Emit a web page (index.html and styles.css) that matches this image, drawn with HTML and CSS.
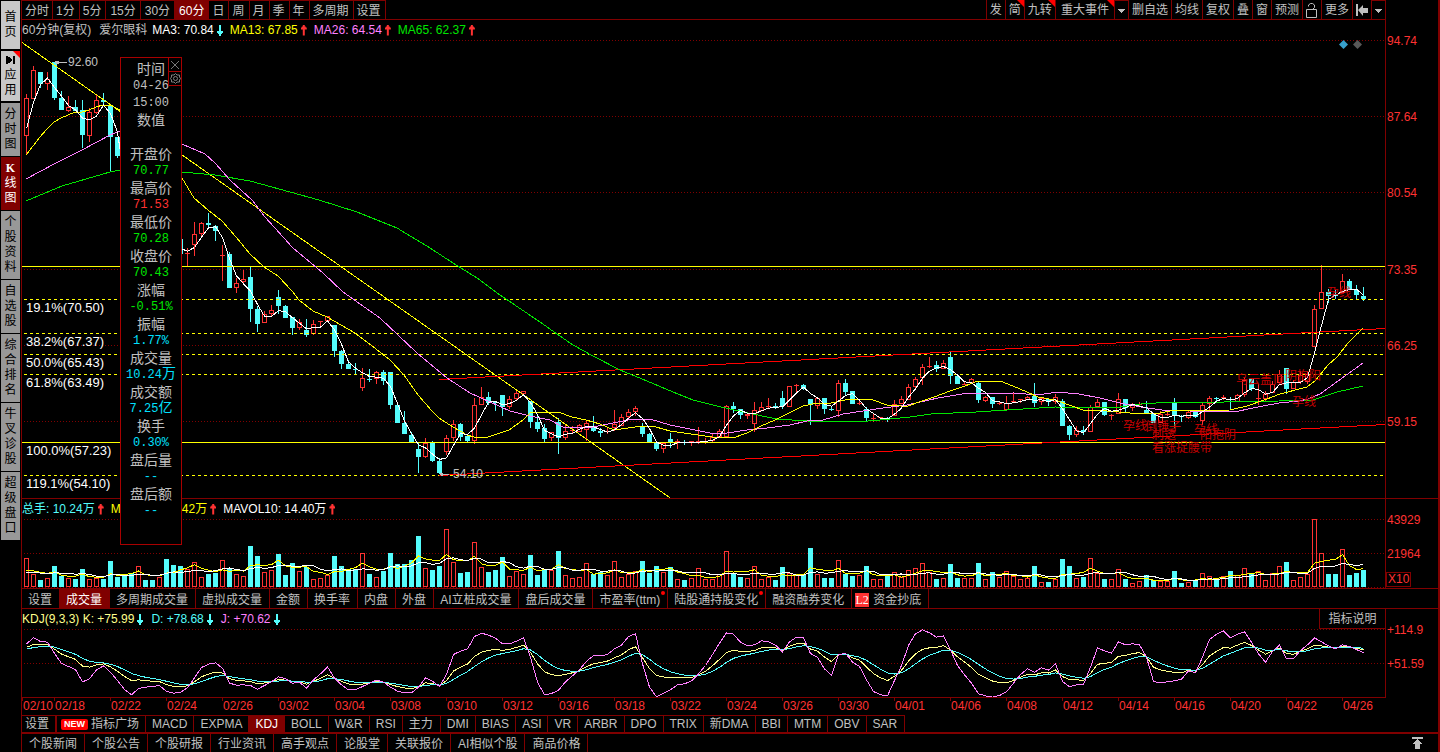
FILE: index.html
```html
<!DOCTYPE html>
<html lang="zh-CN">
<head>
<meta charset="utf-8">
<title>爱尔眼科 60分钟K线</title>
<link rel="stylesheet" href="styles.css">
</head>
<body>
<div class="app">
  <nav class="side">
    <button class="side-btn light">首<br>页</button>
    <button class="side-btn light flag"><svg class="side-icon" width="9" height="8" viewBox="0 0 9 8"><path d="M0 0h2v1h2v1h1v1h1v2H5v1H4v1H2v1H0z M7 0h2v8H7z"/></svg>应<br>用</button>
    <button class="side-btn">分<br>时<br>图</button>
    <button class="side-btn active"><b>K</b><br>线<br>图</button>
    <button class="side-btn">个<br>股<br>资<br>料</button>
    <button class="side-btn">自<br>选<br>股</button>
    <button class="side-btn">综<br>合<br>排<br>名</button>
    <button class="side-btn">牛<br>叉<br>诊<br>股</button>
    <button class="side-btn">超<br>级<br>盘<br>口</button>
  </nav>
  <main class="main">
    <header class="toolbar">
      <div class="group periods">
        <button>分时</button><button>1分</button><button>5分</button><button>15分</button><button>30分</button><button class="active">60分</button><button>日</button><button>周</button><button>月</button><button>季</button><button>年</button><button>多周期</button><button>设置</button>
      </div>
      <div class="group tools">
        <button>发</button><button class="flag">简</button><button class="flag">九转</button><button class="wide flag">重大事件</button><button class="drop" aria-label="展开"><svg width="7" height="4" viewBox="0 0 7 4"><path d="M0 0h7v1H0z M1 1h5v1H1z M2 2h3v1H2z M3 3h1v1H3z"/></svg></button><button>删自选</button><button>均线</button><button>复权</button><button>叠</button><button>窗</button><button>预测</button><button aria-label="锁定"><svg width="12" height="15" viewBox="0 0 12 15" fill="none"><path d="M.5 6.500h10v8H.5z M2.500 3.500V2l2-1.500h2l2 1.500v2.500l-2 2" fill="none" stroke="#c0c0c0"/></svg></button><button>更多</button><button aria-label="收起"><svg width="12" height="12" viewBox="0 0 12 12"><path d="M0 0h2v12H0z M2 6l5-5v3h5v5H7v3z"/></svg></button><button class="drop" aria-label="更多工具"><svg width="7" height="4" viewBox="0 0 7 4"><path d="M0 0h7v1H0z M1 1h5v1H1z M2 2h3v1H2z M3 3h1v1H3z"/></svg></button>
      </div>
    </header>

    <section class="pane price">
      <div class="plot">
        <div class="legend">
          <span class="title">60分钟(复权)</span><span class="title name">爱尔眼科</span>
          <span class="item white">MA3: 70.84<i class="down"></i></span>
          <span class="item yellow">MA13: 67.85<i class="up"></i></span>
          <span class="item pink">MA26: 64.54<i class="up"></i></span>
          <span class="item green">MA65: 62.37<i class="up"></i></span>
        </div>
        <div class="canvas" id="price">
          <svg viewBox="22 40 1363 458" preserveAspectRatio="none"></svg>
          <svg class="marks" width="24" height="9" viewBox="0 0 24 9"><path d="M4.500 0L9 4.500 4.500 9 0 4.500z" fill="#38a0cc"/><path d="M18.500 0L23 4.500 18.500 9 14 4.500z" fill="#585858"/></svg>
        </div>
      </div>
      <div class="axis"><div class="scale" id="price-axis"></div></div>
    </section>

    <section class="pane volume">
      <div class="plot">
        <div class="legend">
          <span class="item cyan">总手: 10.24万<i class="up"></i></span>
          <span class="item yellow">MAVOL5: 12.42万<i class="up"></i></span>
          <span class="item white">MAVOL10: 14.40万<i class="up"></i></span>
        </div>
        <div class="canvas" id="volume"><svg viewBox="22 519 1363 69" preserveAspectRatio="none"></svg></div>
      </div>
      <div class="axis"><div class="scale" id="volume-axis"></div><span class="unit">X10</span></div>
    </section>

    <div class="tabs vol-tabs">
      <button>设置</button><button class="active">成交量</button><button>多周期成交量</button><button>虚拟成交量</button><button>金额</button><button>换手率</button><button>内盘</button><button>外盘</button><button>AI立桩成交量</button><button>盘后成交量</button><button class="dot">市盈率(ttm)</button><button class="dot">陆股通持股变化</button><button>融资融券变化</button><button class="l2"><em>L2</em>资金抄底</button>
    </div>

    <section class="pane kdj">
      <div class="plot">
        <div class="legend">
          <span class="item pale">KDJ(9,3,3) K: +75.99<i class="down"></i></span>
          <span class="item cyan">D: +78.68<i class="down"></i></span>
          <span class="item pink">J: +70.62<i class="down"></i></span>
          <button class="help">指标说明</button>
        </div>
        <div class="canvas" id="kdj"><svg viewBox="22 629 1363 68" preserveAspectRatio="none"></svg></div>
      </div>
      <div class="axis"><div class="scale" id="kdj-axis"></div></div>
    </section>

    <div class="dates" id="dates"></div>

    <div class="tabs ind-tabs">
      <button class="set">设置</button><button class="plaza"><em>NEW</em>指标广场</button><button>MACD</button><button>EXPMA</button><button class="active">KDJ</button><button>BOLL</button><button>W&amp;R</button><button>RSI</button><button class="cjk">主力</button><button>DMI</button><button>BIAS</button><button>ASI</button><button>VR</button><button>ARBR</button><button>DPO</button><button>TRIX</button><button>新DMA</button><button>BBI</button><button>MTM</button><button>OBV</button><button class="cjk">SAR</button>
    </div>

    <footer class="tabs news">
      <button>个股新闻</button><button>个股公告</button><button>个股研报</button><button>行业资讯</button><button>高手观点</button><button>论股堂</button><button>关联报价</button><button>AI相似个股</button><button>商品价格</button>
      <button class="top" aria-label="返回顶部"><svg width="12" height="12" viewBox="0 0 12 12"><path d="M0 0h11v2H0z M5 2h1v1h1v1h1v1h1v1h1v1H8v5H3V7H1V6h1V5h1V4h1V3h1z"/></svg></button>
    </footer>

    <aside class="quote">
      <div class="quote-btns">
        <button aria-label="关闭"><svg width="10" height="10" viewBox="0 0 10 10"><path d="M1 1l8 8M9 1L1 9" fill="none" stroke="#777"/></svg></button>
        <button aria-label="设置"><svg width="11" height="11" viewBox="0 0 11 11" fill="none" stroke="#808080"><path d="M5.500 .5l1.500 1.500 2.500 0 0 2 1 1.500-1 1.500 0 2-2.500 0-1.500 1.500-1.500-1.500-2.500 0 0-2-1-1.500 1-1.500 0-2 2.500 0z"/><circle cx="5.500" cy="5.500" r="2"/></svg></button>
      </div>
      <p>时间</p><p class="num">04-26</p><p class="num">15:00</p><p>数值</p><p>&nbsp;</p>
      <p>开盘价</p><p class="num green">70.77</p>
      <p>最高价</p><p class="num red">71.53</p>
      <p>最低价</p><p class="num green">70.28</p>
      <p>收盘价</p><p class="num green">70.43</p>
      <p>涨幅</p><p class="num green">-0.51%</p>
      <p>振幅</p><p class="num aqua">1.77%</p>
      <p>成交量</p><p class="num aqua">10.24<b>万</b></p>
      <p>成交额</p><p class="num aqua">7.25<b>亿</b></p>
      <p>换手</p><p class="num aqua">0.30%</p>
      <p>盘后量</p><p class="num aqua">--</p>
      <p>盘后额</p><p class="num aqua">--</p>
    </aside>
  </main>
</div>
<script src="chart.js"></script>
</body>
</html>
```

FILE: styles.css
```css
* { box-sizing: border-box; }
body {
  margin: 0;
  background: #000;
  color: #c0c0c0;
  font: 12px/18px "Liberation Sans", "Noto Sans CJK SC", sans-serif;
}
button {
  margin: 0;
  padding: 0;
  border: 0;
  border-radius: 0;
  background: none;
  color: inherit;
  font: inherit;
  white-space: nowrap;
}
p { margin: 0; }
em, i { font-style: normal; }
svg { display: block; fill: #c0c0c0; }

.app { display: flex; min-height: 100vh; border-right: 2px solid #800000; }

/* left navigation */
.side {
  flex: none;
  width: 22px;
  padding: 1px 1px 0;
  border-right: 1px solid #800000;
  display: flex;
  flex-direction: column;
  gap: 1px;
}
.side-btn {
  position: relative;
  padding: 4px 0;
  width: 19px;
  background: #989898;
  color: #000;
  line-height: 15px;
}
.side-btn.light { background: #c8c8c8; padding: 9px 0; margin-bottom: 1px; }
.side-btn.light.flag { padding: 5px 0 3px; }
.side-btn.active { background: #800000; color: #fff; }
.side-btn b { font-family: "Liberation Serif", serif; }
.side-icon { margin: 0 auto 4px; fill: #000; }
.flag::after {
  content: "";
  position: absolute;
  top: 0;
  right: 0;
  border-top: 7px solid #f00;
  border-left: 7px solid transparent;
}

.main { position: relative; flex: 1; min-width: 0; display: flex; flex-direction: column; }

/* top toolbar */
.toolbar {
  display: flex;
  justify-content: space-between;
  height: 20px;
  margin-right: 52px;
  border-bottom: 1px solid #800000;
}
.group { display: flex; }
.group button { position: relative; border-right: 1px solid #800000; padding: 1px 3px 0; }
.periods { border-top: 1px solid #800000; }
.periods .active, .tabs .active { background: #800000; color: #fff; }
.periods button:nth-child(n+2) { padding: 1px 4px 0 3px; }
.periods button:nth-child(n+4):nth-child(-n+6) { padding: 1px 4px 0; }
.tools { border-left: 1px solid #800000; }
.tools .wide { padding: 1px 5px 0; }
.tools .drop { border-top: 1px solid #800000; }

/* chart panes */
.pane { display: grid; grid-template-columns: minmax(0, 1fr) 53px; border-bottom: 1px solid #800000; }
.plot { display: flex; flex-direction: column; }
.legend { display: flex; height: 20px; line-height: 20px; white-space: nowrap; }
.legend .name { margin: 0 5px 0 8px; }
.item { display: flex; align-items: center; margin-right: 7px; }
.item i {
  width: 6px;
  height: 11px;
  margin-left: 3px;
  background: currentColor;
  clip-path: polygon(2px 0, 4px 0, 4px 2px, 5px 2px, 5px 3px, 6px 3px, 6px 5px, 4px 5px, 4px 11px, 2px 11px, 2px 5px, 0 5px, 0 3px, 1px 3px, 1px 2px, 2px 2px);
}
.item .up { color: #ff3232; }
.item .down { color: #54fcfc; transform: rotate(180deg); }
.canvas { position: relative; flex: 1; min-height: 0; }
.canvas > svg:first-child { position: absolute; width: 100%; height: 100%; shape-rendering: crispEdges; fill: none; }
.marks { position: absolute; right: 22px; top: 0; }
.axis { position: relative; display: flex; flex-direction: column; border-left: 1px solid #800000; color: #ff3232; }
.scale { position: relative; flex: 1; margin-top: 20px; }
.scale span, .dates span, .note {
  position: absolute;
  line-height: 14px;
  margin-top: -7px;
  white-space: nowrap;
}
.scale span { left: 1px; }
.note.pct { font-size: 13px; color: #fff; }
.note.pattern { color: #c80000; }
.unit { position: absolute; left: 0; bottom: 1px; padding: 0 1px; border: 1px solid #800000; line-height: 13px; }

.price { flex: 1; }
.volume { height: 90px; }
.kdj { height: 89px; border-bottom: 0; }
.kdj .plot { border-bottom: 1px solid #800000; }
.kdj .item { margin-right: 8px; }
.kdj .help { margin-left: auto; width: 66px; border: solid #800000; border-width: 0 0 1px 1px; line-height: 18px; }

.dates { position: relative; height: 17px; margin-right: 53px; color: #ff3232; }
.dates span { top: 8px; margin-left: 1px; }
.dates span::before {
  content: "";
  position: absolute;
  left: -1px;
  top: -1px;
  height: 3px;
  border-left: 1px solid #800000;
}

/* tab strips */
.tabs { display: flex; }
.tabs button { position: relative; padding: 0 7px 0 6px; border-right: 1px solid #800000; }
.vol-tabs { height: 20px; border-bottom: 1px solid #800000; line-height: 18px; }
.vol-tabs button { padding-top: 2px; }
.dot::after { content: ""; position: absolute; top: 2px; right: 2px; width: 4px; height: 4px; border-radius: 2px; background: #f00; }
.l2 em { display: inline-block; margin: 0 4px 0 -3px; width: 14px; height: 14px; background: #ff3232; color: #fff; font: 12px/14px "Liberation Serif", serif; }
.ind-tabs { height: 19px; border-bottom: 2px solid #800000; line-height: 16px; }
.ind-tabs button { border-top: 1px solid #800000; padding: 0 6px; }
.ind-tabs .cjk { padding: 0 7px 0 6px; }
.ind-tabs .set { padding: 0 6px 0 3px; border-right-width: 2px; }
.ind-tabs .plaza { padding: 0 6px 0 4px; }
.plaza em { display: inline-block; margin-right: 3px; width: 27px; height: 11px; border-radius: 2px; background: #f00; color: #fff; font: bold 9px/11px "Liberation Sans", sans-serif; vertical-align: 1px; }
.news { height: 18px; }
.news button { padding: 1px 7px 0; }
.news .top { margin-left: auto; border: 0; padding: 0 14px 0 0; }

/* floating quote card */
.quote {
  position: absolute;
  left: 98px;
  top: 57px;
  width: 62px;
  padding: 3px 0 24px;
  border: 1px solid #a80000;
  background: #000;
  font-size: 14px;
  line-height: 17px;
  text-align: center;
}
.quote .num { font-family: "Liberation Mono", "Noto Sans CJK SC", monospace; font-size: 12px; }
.quote b { font-size: 14px; font-weight: normal; line-height: 1; }
.quote-btns { position: absolute; right: -1px; top: -1px; width: 14px; }
.quote-btns svg { fill: none; }
.quote-btns button { display: grid; place-items: center; width: 14px; height: 15px; margin-bottom: -1px; border: 1px solid #a80000; background: #000; }

.white { color: #fff; }
.yellow { color: #ff0; }
.pink { color: #ff80ff; }
.green { color: #00e600; }
.cyan { color: #54fcfc; }
.aqua { color: #00e0ff; }
.pale { color: #ffff8c; }
.red { color: #ff3232; }
```

FILE: chart.js
```js
const NS = 'http://www.w3.org/2000/svg';
const LEFT = 22, WIDTH = 1363, STEP = 7;
const UP = '#ff3232', DOWN = '#54fcfc';
const xOf = i => 26 + STEP * i;

// direction, high, body top, body bottom, low; short rows carry only a direction
const candles = `u 94 98 135 155|u 66 70 98 98|d 72 72 84 88|u 72 79 83 90|d 62 62 98 100|d 91 98 110 110|u 96 107 110 112|d 100 107 111 111
d 100 110 135 148|u 108 112 135 142|u 95 100 112 114|d 93 100 102 104|d 105 105 137 171|d 137 137 156 158|d|d|u|d|d|u|d|d|d 236 239 254 254|u 248 253 253 266
u 222 234 244 256|u 222 223 233 236|d 213 223 225 228|d 225 226 231 241|u 245 255 255 281|d 252 254 288 288|u 278 283 287 293|u 270 279 281 283
d 267 277 309 322|d 306 309 324 332|u 311 314 322 322|u 305 310 313 316|d 290 297 306 314|d 305 306 318 318|d 317 317 328 335|u 319 322 327 330
d 319 330 335 337|u 320 324 333 335|u 321 321 321 327|u 316 316 320 320|d 325 325 351 357|d 350 351 364 369|d 360 364 369 369|d 363 369 370 374
u 368 378 387 391|d 369 379 380 382|u 371 372 378 384|d 370 372 381 385|d 372 372 405 409|d 405 405 423 423|d 411 423 434 434|d 432 435 442 443
d 443 449 457 473|u 438 443 456 458|d 441 443 461 462|d 458 461 473 474|u 435 438 451 455|u 420 424 437 441|d 423 424 437 441|d 435 436 441 442
u 398 405 440 444|u 387 397 404 404|d 392 397 403 405|d 401 402 403 411|d 395 395 407 416|u 396 399 406 409|u 390 393 398 400|u 391 391 393 395
d 401 401 422 428|d 415 422 429 432|d 424 428 439 442|u 432 432 437 441|d 418 422 438 454|u 425 431 437 440|u 426 430 430 434|u 424 425 431 431
u 420 423 429 441|d 416 427 431 432|d 428 431 433 437|u 428 431 431 434|u 410 424 427 431|u 414 417 425 425|u 409 412 416 420|u 406 408 411 416
d 423 427 434 437|d 433 434 442 442|d 442 442 449 451|u 442 443 448 453|d 433 439 443 448|u 439 441 442 449|d 440 442 443 445|u 441 441 441 446
u 427 441 441 444|u 438 441 441 444|u 433 437 440 443|u 429 431 436 438|u 405 406 436 438|d 402 406 409 413|d 409 409 415 419|u 412 414 415 419
u 402 410 423 432|u 402 407 410 411|u 398 406 406 409|d 403 406 407 409|d 391 398 406 409|u 386 386 406 406|u 384 385 385 392|d 384 385 389 390
d 399 399 405 425|u 397 398 405 409|d 398 398 409 414|d 406 409 410 411|u 380 383 410 417|d 379 383 392 395|d 391 391 404 404|u 400 403 403 405
d 407 409 418 421|u 414 418 418 422|u 417 417 417 418|d 417 418 420 422|u 400 404 415 415|u 396 399 403 403|u 384 387 399 399|u 377 379 386 389
u 364 367 377 385|u 357 366 366 368|d 361 365 369 372|u 360 363 368 368|d 352 357 376 384|d 375 376 384 384|u 381 384 384 385|u 378 379 382 382
d 381 383 400 403|u 396 397 400 402|d 397 397 404 408|u 401 403 403 405|u 396 403 409 410|u 392 401 401 402|u 399 399 399 403|u 396 397 399 400
d 383 396 403 407|u 398 398 401 405|d 398 399 402 406|u 394 397 401 404|d 399 401 426 426|d 425 426 435 440|u 426 430 434 437|d 426 430 432 435
u 405 407 431 431|u 399 402 406 406|d 402 402 415 416|u 414 415 415 420|u 393 399 413 413|d 399 399 408 413|u 403 405 407 411|u 402 404 404 407
d 401 410 413 414|d 413 413 423 423|u 411 414 422 422|u 411 414 414 416|d 398 403 416 428|d 415 416 417 422|u 410 412 417 419|d 412 412 417 418
u 403 405 420 425|u 396 398 403 410|d 397 398 399 402|u 395 397 397 400|d 397 401 402 410|u 394 395 401 402|u 377 380 394 397|d 379 379 389 391
u 384 398 398 405|u 391 394 398 401|u 381 384 392 392|u 370 374 382 383|d 368 368 389 394|u 380 382 388 388|u 371 375 381 384|u 371 374 381 384
u 305 309 346 347|u 265 292 308 308|d 289 292 296 303|d 290 294 296 299|u 274 281 292 292|d 279 281 290 290|d 285 290 295 299|d 287 296 299 301`
  .split(/[|\n]/).map(row => {
    const [dir, ...v] = row.trim().split(' ');
    return { dir, v: v.map(Number) };
  });

// bar tops and J values are kept in thirds of a pixel, measured from y = 490
const barTops = [
  205, 252, 270, 265, 228, 258, 265, 267, 237, 267, 264, 267, 213, 261, 255, 250, 229, 270, 270, 262, 207, 225, 228, 237,
  217, 262, 252, 249, 211, 237, 252, 259, 168, 198, 247, 240, 192, 255, 219, 244, 231, 267, 265, 255, 198, 228, 237, 238,
  190, 252, 262, 243, 189, 222, 222, 210, 138, 235, 240, 228, 118, 216, 249, 246, 156, 232, 246, 240, 201, 259, 244, 253,
  195, 255, 237, 241, 183, 256, 265, 262, 220, 252, 246, 256, 214, 262, 253, 244, 213, 249, 228, 247, 231, 268, 270, 265,
  235, 268, 268, 253, 184, 250, 261, 265, 229, 268, 262, 270, 231, 250, 253, 252, 174, 253, 264, 264, 211, 252, 258, 256,
  228, 268, 268, 255, 247, 262, 241, 235, 220, 247, 267, 265, 222, 264, 265, 265, 219, 268, 246, 262, 244, 259, 268, 265,
  228, 277, 276, 268, 207, 228, 265, 261, 205, 250, 267, 268, 238, 267, 280, 274, 255, 271, 274, 274, 243, 279, 277, 270,
  250, 259, 264, 259, 243, 256, 235, 252, 244, 271, 250, 229, 216, 271, 262, 253, 88, 190, 252, 252, 178, 255, 249, 240];
const jLine = [
  460, 442, 453, 455, 488, 519, 528, 537, 574, 565, 538, 526, 545, 570, 597, 613, 594, 590, 588, 585, 603, 608, 605, 592,
  562, 531, 521, 517, 533, 578, 584, 583, 585, 596, 585, 574, 559, 565, 578, 575, 593, 568, 550, 529, 563, 583, 598, 598,
  588, 578, 569, 575, 590, 602, 607, 607, 590, 562, 572, 588, 552, 492, 482, 475, 438, 428, 434, 443, 460, 460, 452, 442,
  500, 575, 613, 609, 599, 574, 556, 537, 512, 496, 496, 492, 475, 464, 438, 430, 520, 590, 619, 608, 598, 583, 580, 571,
  550, 525, 492, 458, 427, 431, 455, 466, 463, 451, 454, 464, 484, 454, 440, 442, 489, 500, 535, 555, 493, 488, 515, 528,
  568, 603, 613, 616, 570, 525, 465, 430, 418, 427, 440, 436, 478, 525, 553, 578, 610, 616, 620, 615, 604, 578, 552, 535,
  545, 532, 539, 520, 573, 589, 583, 582, 530, 472, 481, 488, 454, 463, 460, 463, 500, 573, 577, 574, 571, 566, 541, 547,
  500, 447, 431, 421, 442, 431, 424, 455, 490, 515, 483, 464, 505, 505, 480, 463, 442, 454, 466, 475, 463, 468, 477, 487];
const third = v => 490 + v / 3;

const ma13 = '26,155 33,146 40,137 47,129 54,122 61,118 68,115 75,112 82,112 89,110 96,107 103,105 110,105 120,110 150,140 182,178 194,198 208,210 222,221 236,237 250,254 264,267 278,276 292,291 299,300 313,311 327,317 341,325 355,333 376,349 390,360 404,375 418,395 432,411 439,418 453,427 467,435 474,437 488,437 509,430 523,420 530,413 558,412 572,417 586,420 600,424 614,430 628,428 642,426 656,427 670,431 684,433 698,435 712,437 733,438 747,433 761,426 775,420 789,413 803,406 817,403 831,403 845,400 859,399 873,400 887,405 901,406 908,406 922,401 934,397 950,391 965,386 978,381 1000,381 1013,386 1027,392 1038,397 1055,400 1069,405 1083,410 1107,411 1130,413 1155,414 1170,411 1230,410 1247,406 1267,399 1280,394 1307,387 1315,381 1328,365 1337,357 1348,343 1363,328';
const ma26 = '26,179 54,164 82,150 110,135 120,131 182,144 205,154 215,163 230,180 252,200 265,217 293,248 323,273 343,292 380,318 417,353 447,378 470,393 490,402 510,411 530,416 550,420 563,427 573,428 593,427 613,423 633,419 650,419 670,425 690,429 710,433 727,433 747,430 767,428 790,425 807,421 823,420 843,414 863,411 883,408 907,405 938,398 962,394 1014,393 1038,395 1057,392 1079,394 1100,398 1120,403 1141,407 1162,410 1189,411 1234,412 1258,407 1279,403 1299,401 1308,399 1320,394 1363,363';
const ma65 = '26,201 62,186 110,172 120,170 182,172 215,175 250,181 290,192 319,200 357,212 397,228 430,248 453,263 477,278 500,295 540,322 557,334 573,345 593,356 620,370 647,381 673,392 693,400 717,406 743,412 777,419 807,421 857,422 880,420 910,417 931,414 976,412 1007,410 1055,407 1093,408 1120,407 1141,404 1172,402 1224,402 1279,401 1313,400 1337,392 1363,386';

function draw(svg, tag, attrs) {
  const el = document.createElementNS(NS, tag);
  for (const k in attrs) el.setAttribute(k, attrs[k]);
  svg.appendChild(el);
}
const line = (svg, x1, y1, x2, y2, stroke, dash) =>
  draw(svg, 'path', { d: `M${x1} ${y1 + 0.5}L${x2} ${y2 + 0.5}`, stroke, ...(dash && { 'stroke-dasharray': dash }) });
const grid = (svg, ys) => ys.forEach(y => line(svg, LEFT + 2, y, LEFT + WIDTH, y, '#800000', '1 2'));
const poly = (svg, points, stroke) => draw(svg, 'polyline', { points, stroke });
const series = ys => ys.map((y, i) => `${xOf(i) + 0.5},${y + 0.5}`).join(' ');
const average = (values, n) => values.map((_, i) => {
  const part = values.slice(Math.max(0, i - n + 1), i + 1);
  return part.reduce((a, b) => a + b, 0) / part.length;
});
function label(box, text, left, top, cls) {
  const el = document.createElement('span');
  el.textContent = text;
  el.className = cls || '';
  if (left != null) el.style.left = left + '%';
  if (top != null) el.style.top = top + '%';
  box.appendChild(el);
}

// price pane
const priceBox = document.getElementById('price');
const price = priceBox.querySelector('svg');
grid(price, [40, 116, 192, 269, 345, 421]);
candles.forEach(({ dir, v }, i) => {
  if (!v.length) return;
  const [hi, top, bottom, lo] = v, x = xOf(i), color = dir === 'u' ? UP : DOWN;
  if (hi < top) draw(price, 'rect', { x, y: hi, width: 1, height: top - hi, fill: color });
  if (lo > bottom) draw(price, 'rect', { x, y: bottom, width: 1, height: lo - bottom, fill: color });
  if (dir === 'd' || top === bottom) draw(price, 'rect', { x: x - 2, y: top, width: 5, height: Math.max(1, bottom - top), fill: color });
  else draw(price, 'rect', { x: x - 1.5, y: top + 0.5, width: 4, height: bottom - top, stroke: color });
});
[299, 333, 354, 374, 475].forEach(y => line(price, LEFT + 2, y, LEFT + WIDTH, y, '#ff0', '3 3'));
[266, 442].forEach(y => line(price, LEFT, y, LEFT + WIDTH, y, '#ff0'));
line(price, 22, 42, 671, 498, '#ff0');
line(price, 439, 379, 1385, 328, '#f00');
line(price, 439, 475, 1385, 424, '#f00');
const closes = candles.map(({ dir, v }) => (v.length ? (dir === 'u' ? v[1] : v[2]) : 245));
const ma3 = average(closes, 3);
ma3[0] = 128;
ma3[1] = 102;
poly(price, ma65, '#00e600');
poly(price, ma26, '#ff80ff');
poly(price, ma13, '#ff0');
poly(price, series(ma3), '#fff');
draw(price, 'path', { d: 'M55 62.5H67M55 61.5H59M56 63.5H59', stroke: '#c0c0c0' });
draw(price, 'path', { d: 'M440 474.5H449M440 473.5H443M441 475.5H443', stroke: '#c0c0c0' });

[
  ['92.60', 68, 62], ['54.10', 453, 474],
  ['19.1%(70.50)', 26, 308, 'pct'], ['38.2%(67.37)', 26, 342, 'pct'], ['50.0%(65.43)', 26, 363, 'pct'],
  ['61.8%(63.49)', 26, 383, 'pct'], ['100.0%(57.23)', 26, 451, 'pct'], ['119.1%(54.10)', 26, 484, 'pct'],
  ['孕线', 1123, 426, 'pattern'], ['倒锤子', 1145, 427, 'pattern'], ['刺透', 1152, 435, 'pattern'],
  ['孕线', 1194, 430, 'pattern'], ['阳抱阴', 1200, 435, 'pattern'], ['看涨捉腰带', 1152, 448, 'pattern'],
  ['乌云盖顶', 1236, 380, 'pattern'], ['阴抱阳', 1285, 376, 'pattern'], ['孕线', 1292, 402, 'pattern'], ['孕线', 1327, 293, 'pattern'],
].forEach(([t, x, y, c]) => label(priceBox, t, (x - LEFT) / WIDTH * 100, (y - 40) / 458 * 100, 'note ' + (c || '')));
[['94.74', 41], ['87.64', 117], ['80.54', 193], ['73.35', 270], ['66.25', 346], ['59.15', 422]]
  .forEach(([t, y]) => label(document.getElementById('price-axis'), t, null, (y - 40) / 458 * 100));

// volume pane
const volume = document.querySelector('#volume svg');
grid(volume, [519, 553, 587]);
barTops.forEach((t, i) => {
  const y = Math.round(third(t)), x = xOf(i);
  if (candles[i].dir === 'u') draw(volume, 'rect', { x: x - 1.5, y: y + 0.5, width: 4, height: 586 - y, stroke: UP });
  else draw(volume, 'rect', { x: x - 2, y, width: 5, height: 587 - y, fill: DOWN });
});
const seeded = [...Array(10).fill(250), ...barTops];
poly(volume, series(average(seeded, 5).slice(10).map(third)), '#ff0');
poly(volume, series(average(seeded, 10).slice(10).map(third)), '#fff');
[['43929', 520], ['21964', 554]]
  .forEach(([t, y]) => label(document.getElementById('volume-axis'), t, null, (y - 519) / 69 * 100));

// KDJ pane: D follows J with a 1/7 weight, K lies a third of the way from D to J
const kdj = document.querySelector('#kdj svg');
grid(kdj, [629, 663]);
const dLine = [];
jLine.forEach((j, i) => dLine.push(i ? (6 * dLine[i - 1] + j) / 7 : 476));
const kLine = jLine.map((j, i) => (j + 2 * dLine[i]) / 3);
poly(kdj, series(kLine.map(third)), '#ffff8c');
poly(kdj, series(dLine.map(third)), '#54fcfc');
poly(kdj, series(jLine.map(third)), '#ff80ff');
[['+114.9', 629], ['+51.59', 663]]
  .forEach(([t, y]) => label(document.getElementById('kdj-axis'), t, null, (y - 628) / 69 * 100));

// date axis
const dates = document.getElementById('dates');
label(dates, '02/10', 0, null);
['02/18', '02/22', '02/24', '02/26', '03/02', '03/04', '03/08', '03/10', '03/12', '03/16', '03/18', '03/22',
  '03/24', '03/26', '03/30', '04/01', '04/06', '04/08', '04/12', '04/14', '04/16', '04/20', '04/22', '04/26']
  .forEach((d, n) => label(dates, d, (xOf(4 + 8 * n) - LEFT) / WIDTH * 100, null));
```
